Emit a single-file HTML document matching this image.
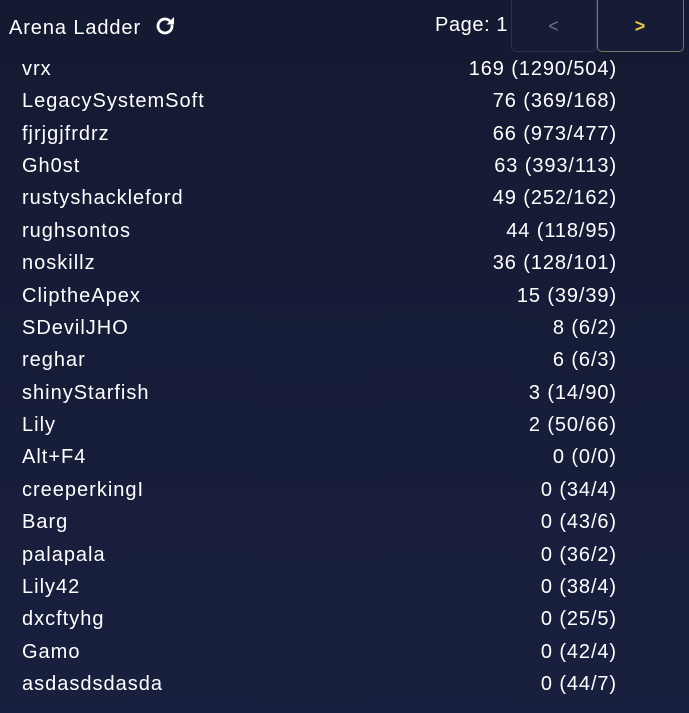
<!DOCTYPE html>
<html><head><style>
html,body{margin:0;padding:0;}
body{width:689px;height:713px;background:linear-gradient(#141a31,#19203f);font-family:"Liberation Sans",sans-serif;color:#fff;position:relative;overflow:hidden;letter-spacing:1px;}
.title{position:absolute;left:9px;top:14px;font-size:20px;letter-spacing:0.9px;}
.page{position:absolute;left:435px;top:14px;font-size:20px;letter-spacing:0.6px;}
.btn{position:absolute;top:-4px;height:56px;border-radius:5px;box-sizing:border-box;background:#161c36;font-size:18px;text-align:center;line-height:58px;}
.prev{left:511px;width:86px;border:1px solid #2c3350;color:#6d7288;}
.next{left:597px;width:87px;border:1px solid #77785e;color:#e8c84a;font-weight:bold;}
.row{position:absolute;left:22px;width:594px;font-size:20px;height:24px;line-height:24px;}
.row span{position:absolute;right:-1px;top:0;letter-spacing:0.9px;}
</style></head><body>
<div class="title">Arena Ladder <svg width="24" height="24" viewBox="0 0 24 24" style="vertical-align:-4px;margin-left:6px"><path d="M19 12a7 7 0 1 1-2.1-5" fill="none" stroke="#fff" stroke-width="2.8" stroke-linecap="round"/><path d="M21 3v7.5h-7.5z" fill="#fff"/></svg></div>
<div class="page">Page: 1</div>
<div class="btn prev">&lt;</div>
<div class="btn next">&gt;</div>
<div class="row" style="top:57px">vrx<span>169 (1290/504)</span></div>
<div class="row" style="top:89px">LegacySystemSoft<span>76 (369/168)</span></div>
<div class="row" style="top:122px">fjrjgjfrdrz<span>66 (973/477)</span></div>
<div class="row" style="top:154px">Gh0st<span>63 (393/113)</span></div>
<div class="row" style="top:186px">rustyshackleford<span>49 (252/162)</span></div>
<div class="row" style="top:219px">rughsontos<span>44 (118/95)</span></div>
<div class="row" style="top:251px">noskillz<span>36 (128/101)</span></div>
<div class="row" style="top:284px">CliptheApex<span>15 (39/39)</span></div>
<div class="row" style="top:316px">SDevilJHO<span>8 (6/2)</span></div>
<div class="row" style="top:348px">reghar<span>6 (6/3)</span></div>
<div class="row" style="top:381px">shinyStarfish<span>3 (14/90)</span></div>
<div class="row" style="top:413px">Lily<span>2 (50/66)</span></div>
<div class="row" style="top:445px">Alt+F4<span>0 (0/0)</span></div>
<div class="row" style="top:478px">creeperkingI<span>0 (34/4)</span></div>
<div class="row" style="top:510px">Barg<span>0 (43/6)</span></div>
<div class="row" style="top:543px">palapala<span>0 (36/2)</span></div>
<div class="row" style="top:575px">Lily42<span>0 (38/4)</span></div>
<div class="row" style="top:607px">dxcftyhg<span>0 (25/5)</span></div>
<div class="row" style="top:640px">Gamo<span>0 (42/4)</span></div>
<div class="row" style="top:672px">asdasdsdasda<span>0 (44/7)</span></div>
</body></html>
